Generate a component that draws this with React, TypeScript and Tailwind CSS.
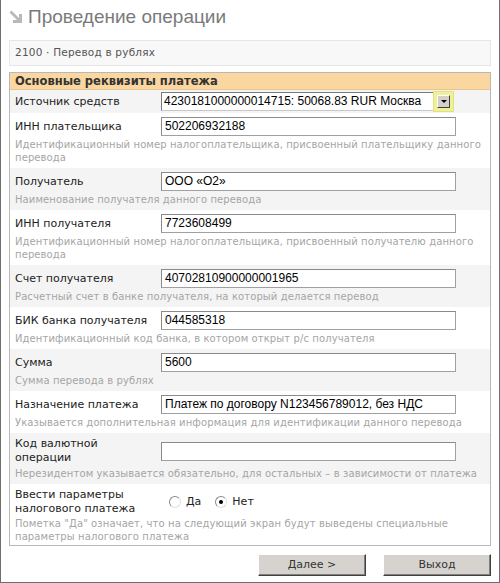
import type { ReactNode } from 'react';
import clsx from 'clsx';

const verdana = "font-['DejaVu_Sans',Verdana,sans-serif]";
const arial = "font-['Liberation_Sans',Arial,sans-serif]";

interface RowProps {
  label: ReactNode;
  hint?: ReactNode;
  gray?: boolean;
  tight?: boolean;
  children?: ReactNode;
}

function Row({ label, hint, gray, tight, children }: RowProps) {
  return (
    <div className={clsx('px-[5px] pt-[4px]', tight ? 'pb-[2px]' : 'pb-[4px]', gray ? 'bg-[#f4f4f4]' : 'bg-white')}>
      <div className="flex items-center">
        <div className="w-[146px] shrink-0 text-[11px] leading-[14px] text-[#222]">{label}</div>
        {children}
      </div>
      {hint && (
        <div
          className={clsx(
            tight ? 'mt-[1px]' : 'mt-[2px]',
            'text-[10px] leading-[13px] tracking-[0.1px] text-[#a5a5a5]'
          )}
        >
          {hint}
        </div>
      )}
    </div>
  );
}

function TextBox({ value = '' }: { value?: string }) {
  return (
    <div
      className={clsx(
        arial,
        'w-[295px] h-[19px] border border-[#a0a0a0] border-t-[#8a8a8a] border-l-[#8a8a8a] bg-white pl-[3px] text-[12px] leading-[17px] text-black'
      )}
    >
      {value}
    </div>
  );
}

function Radio({ checked, label }: { checked?: boolean; label: string }) {
  return (
    <div className="flex items-center gap-[5px]">
      <span className="relative w-[12px] h-[12px] rounded-full border border-[#8a8a8a] border-r-[#e0e0e0] border-b-[#e0e0e0] bg-white">
        {checked && <span className="absolute left-[3px] top-[3px] w-[4px] h-[4px] rounded-full bg-black" />}
      </span>
      <span className="text-[11px] text-[#222]">{label}</span>
    </div>
  );
}

function Button({ children }: { children: ReactNode }) {
  return (
    <button className="w-[108px] h-[22px] bg-[#d6d3ce] border border-t-white border-l-white border-r-[#404040] border-b-[#404040] shadow-[inset_-1px_-1px_0_#808080] text-[11px] text-[#333]">
      {children}
    </button>
  );
}

export default function App() {
  return (
    <div className={clsx(verdana, 'w-[500px] h-[583px] bg-white border-x border-b border-[#6e6e6e] box-border')}>
      {/* Заголовок */}
      <div className="h-[36px] pl-[7px] pt-[7px] flex items-start gap-[4px]">
        <svg width="16" height="16" viewBox="0 0 16 16" className="mt-[2px]">
          <path d="M1.5 3.5 L3.5 1.5 L11 9 L11 5 L14 5 L14 14 L5 14 L5 11 L9 11 Z" fill="#b9b9b9" />
        </svg>
        <span className={clsx(arial, 'text-[19px] leading-[20px] text-[#7a7a7a]')}>Проведение операции</span>
      </div>

      <div className="mx-[8px] mt-[4px] h-[26px] border border-[#e6e6e6] bg-[#f8f8f8] flex items-center pl-[5px] text-[10.5px] tracking-[0.2px] text-[#555]">
        2100 · Перевод в рублях
      </div>

      {/* Основные реквизиты */}
      <div className="mx-[8px] mt-[6px] border border-[#b8b8b8]">
        <div className="h-[17px] bg-[#fad6a0] border-b border-[#e8c590] pl-[5px] text-[11.5px] leading-[16px] font-bold text-[#333]">
          Основные реквизиты платежа
        </div>

        <div className="bg-[#f4f4f4] px-[5px] py-[2px] flex items-center">
          <div className="w-[146px] shrink-0 text-[11px] leading-[14px] text-[#222]">Источник средств</div>
          <div className="flex items-center w-[293px] h-[19px] border border-[#7a7a7a] border-r-[#c8c8c8] border-b-[#c8c8c8] bg-white">
            <span className={clsx(arial, 'flex-1 pl-[2px] text-[12px] leading-[17px] text-black whitespace-nowrap overflow-hidden')}>
              4230181000000014715: 50068.83 RUR Москва
            </span>
            <span className="w-[21px] h-[21px] -mr-[1px] flex items-center justify-center bg-[#f0f09a] border border-[#e2e27a]">
              <span className="w-[13px] h-[13px] bg-[#d4d0c8] border border-t-white border-l-white border-r-[#404040] border-b-[#404040] flex items-center justify-center">
                <span className="w-0 h-0 border-l-[3px] border-r-[3px] border-t-[3px] border-l-transparent border-r-transparent border-t-black" />
              </span>
            </span>
          </div>
        </div>

        <Row
          label="ИНН плательщика"
          hint="Идентификационный номер налогоплательщика, присвоенный плательщику данного перевода"
        >
          <TextBox value="502206932188" />
        </Row>
        <Row gray label="Получатель" hint="Наименование получателя данного перевода">
          <TextBox value="ООО «О2»" />
        </Row>
        <Row
          label="ИНН получателя"
          hint="Идентификационный номер налогоплательщика, присвоенный получателю данного перевода"
        >
          <TextBox value="7723608499" />
        </Row>
        <Row gray label="Счет получателя" hint="Расчетный счет в банке получателя, на который делается перевод">
          <TextBox value="40702810900000001965" />
        </Row>
        <Row label="БИК банка получателя" hint="Идентификационный код банка, в котором открыт р/с получателя">
          <TextBox value="044585318" />
        </Row>
        <Row gray label="Сумма" hint="Сумма перевода в рублях">
          <TextBox value="5600" />
        </Row>
        <Row
          label="Назначение платежа"
          hint="Указывается дополнительная информация для идентификации данного перевода"
        >
          <TextBox value="Платеж по договору N123456789012, без НДС" />
        </Row>
        <Row
          gray
          label={
            <>
              Код валютной
              <br />
              операции
            </>
          }
          hint="Нерезидентом указывается обязательно, для остальных – в зависимости от платежа"
        >
          <TextBox />
        </Row>
        <Row
          tight
          label={
            <>
              Ввести параметры
              <br />
              налогового платежа
            </>
          }
          hint="Пометка &quot;Да&quot; означает, что на следующий экран будут выведены специальные параметры налогового платежа"
        >
          <div className="flex items-center gap-[14px] pl-[8px]">
            <Radio label="Да" />
            <Radio checked label="Нет" />
          </div>
        </Row>
      </div>

      <div className="mx-[8px] mt-[8px] flex justify-end gap-[17px]">
        <Button>Далее &gt;</Button>
        <Button>Выход</Button>
      </div>
    </div>
  );
}
